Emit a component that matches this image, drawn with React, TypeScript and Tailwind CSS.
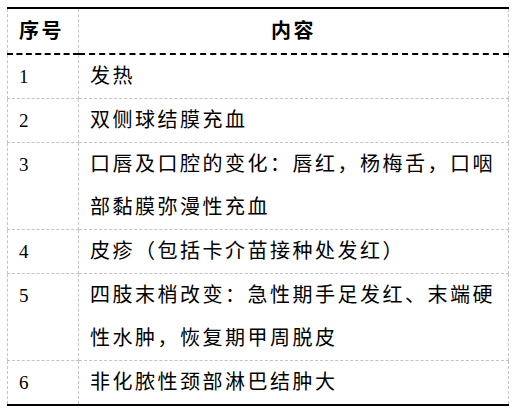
const rows: { no: string; text: string }[] = [
  { no: "1", text: "发热" },
  { no: "2", text: "双侧球结膜充血" },
  { no: "3", text: "口唇及口腔的变化：唇红，杨梅舌，口咽部黏膜弥漫性充血" },
  { no: "4", text: "皮疹（包括卡介苗接种处发红）" },
  { no: "5", text: "四肢末梢改变：急性期手足发红、末端硬性水肿，恢复期甲周脱皮" },
  { no: "6", text: "非化脓性颈部淋巴结肿大" },
];

export default function App() {
  return (
    <div className="min-h-screen bg-white pl-[7px] pt-[7px] font-['Liberation_Serif','Noto_Sans_CJK_SC',serif] text-black">
      <table className="w-[502px] table-fixed border-collapse border-y-2 border-black">
        <thead>
          <tr>
            <th className="w-[71px] border border-b-2 border-dashed border-[#c4c4c4] border-b-black px-[11px] text-left align-top text-[20px] font-semibold leading-[44px] tracking-[2.5px]">
              序号
            </th>
            <th className="border border-b-2 border-dashed border-[#c4c4c4] border-b-black px-[11px] text-center align-top text-[20px] font-semibold leading-[44px] tracking-[2.5px]">
              内容
            </th>
          </tr>
        </thead>
        <tbody>
          {rows.map((r) => (
            <tr key={r.no}>
              <td className="border border-dashed border-[#c4c4c4] px-[11px] align-top text-[19px] leading-[43px]">
                {r.no}
              </td>
              <td className="border border-dashed border-[#c4c4c4] px-[11px] align-top text-[20px] leading-[43px] tracking-[2.5px]">
                {r.text}
              </td>
            </tr>
          ))}
        </tbody>
      </table>
    </div>
  );
}
